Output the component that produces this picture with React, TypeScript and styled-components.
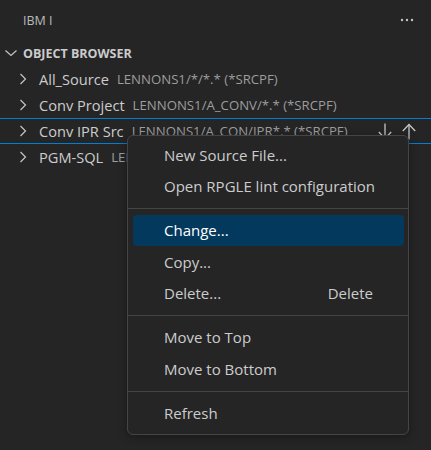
import React from "react";
import styled, { createGlobalStyle } from "styled-components";

type MenuEntry =
  | { kind: "item"; label: string; keys?: string; active?: boolean }
  | { kind: "sep" };

const rows = [
  { label: "All_Source", desc: "LENNONS1/*/*.* (*SRCPF)" },
  { label: "Conv Project", desc: "LENNONS1/A_CONV/*.* (*SRCPF)" },
  { label: "Conv IPR Src", desc: "LENNONS1/A_CON/IPR*.* (*SRCPF)", focused: true },
  { label: "PGM-SQL", desc: "LENNONS1/PGMSQL/*.* (*SRCPF)" },
];

const menu: MenuEntry[] = [
  { kind: "item", label: "New Source File..." },
  { kind: "item", label: "Open RPGLE lint configuration" },
  { kind: "sep" },
  { kind: "item", label: "Change...", active: true },
  { kind: "item", label: "Copy..." },
  { kind: "item", label: "Delete...", keys: "Delete" },
  { kind: "sep" },
  { kind: "item", label: "Move to Top" },
  { kind: "item", label: "Move to Bottom" },
  { kind: "sep" },
  { kind: "item", label: "Refresh" },
];

const Chevron: React.FC<{ down?: boolean }> = ({ down }) =>
  down ? (
    <svg width="18" height="18" viewBox="0 0 18 18">
      <polyline points="3.5,6.5 9,11.5 14.5,6.5" fill="none" stroke="#c5c5c5" strokeWidth="1.2" />
    </svg>
  ) : (
    <svg width="16" height="16" viewBox="0 0 16 16">
      <polyline points="5.5,3 10.5,8 5.5,13" fill="none" stroke="#c5c5c5" strokeWidth="1.2" />
    </svg>
  );

const Arrow: React.FC<{ up?: boolean }> = ({ up }) => (
  <svg width="16" height="17" viewBox="0 0 16 17" style={up ? undefined : { transform: "scaleY(-1)" }}>
    <polyline points="1.8,8 8,1.5 14.2,8" fill="none" stroke="#c5c5c5" strokeWidth="1.3" />
    <line x1="8" y1="1.5" x2="8" y2="16.5" stroke="#c5c5c5" strokeWidth="1.3" />
  </svg>
);

const App: React.FC = () => {
  return (
    <>
      <GlobalStyle />
      <Sidebar>
        <TitleBar>
          <span>IBM I</span>
          <Dots>
            <svg width="14" height="4" viewBox="0 0 14 4">
              <circle cx="2" cy="2" r="1.2" fill="#c5c5c5" />
              <circle cx="7" cy="2" r="1.2" fill="#c5c5c5" />
              <circle cx="12" cy="2" r="1.2" fill="#c5c5c5" />
            </svg>
          </Dots>
        </TitleBar>

        <SectionHeader>
          <Chevron down />
          <span>OBJECT BROWSER</span>
        </SectionHeader>

        <Tree>
          {rows.map((r) => (
            <Row key={r.label} $focused={r.focused}>
              <Twistie>
                <Chevron />
              </Twistie>
              <Label>{r.label}</Label>
              <Desc>{r.desc}</Desc>
              {r.focused && (
                <Actions>
                  <Arrow />
                  <Arrow up />
                </Actions>
              )}
            </Row>
          ))}
        </Tree>

        <Menu>
          {menu.map((m, i) =>
            m.kind === "sep" ? (
              <Separator key={i} />
            ) : (
              <MenuItem key={i} $active={m.active}>
                <span>{m.label}</span>
                {m.keys && <Keys>{m.keys}</Keys>}
              </MenuItem>
            )
          )}
        </Menu>
      </Sidebar>
    </>
  );
};

export default App;

/* ===================== styles ===================== */
const GlobalStyle = createGlobalStyle`
  html, body {
    margin: 0;
    padding: 0;
    background: #252526;
  }
  body {
    font-family: "Open Sans", "Noto Sans", sans-serif;
    -webkit-font-smoothing: antialiased;
  }
`;

const Sidebar = styled.div`
  position: relative;
  width: 431px;
  height: 450px;
  overflow: hidden;
  background: #252526;
  color: #cccccc;
`;

const TitleBar = styled.div`
  height: 40px;
  display: flex;
  align-items: center;
  justify-content: space-between;
  padding: 0 17px 0 23px;
  font-size: 12.5px;
  color: #bbbbbb;
`;

const Dots = styled.div`
  display: flex;
  align-items: center;
`;

const SectionHeader = styled.div`
  height: 26px;
  display: flex;
  align-items: center;
  gap: 3px;
  padding-left: 2px;
  font-size: 12.5px;
  font-weight: 700;
  color: #cccccc;

  svg {
    flex-shrink: 0;
  }
`;

const Tree = styled.div`
  display: flex;
  flex-direction: column;
`;

const Row = styled.div<{ $focused?: boolean }>`
  height: 26px;
  box-sizing: border-box;
  display: flex;
  align-items: center;
  padding-left: 15px;
  font-size: 14.6px;
  white-space: nowrap;
  border-top: 1px solid ${({ $focused }) => ($focused ? "#007fd4" : "transparent")};
  border-bottom: 1px solid ${({ $focused }) => ($focused ? "#007fd4" : "transparent")};
`;

const Twistie = styled.span`
  width: 16px;
  height: 16px;
  display: flex;
  margin-right: 8px;
`;

const Label = styled.span`
  color: #cccccc;
`;

const Desc = styled.span`
  margin-left: 8px;
  font-size: 13.2px;
  color: #9d9d9d;
`;

const Actions = styled.div`
  margin-left: auto;
  display: flex;
  align-items: center;
  gap: 7.5px;
  padding-right: 14.5px;
`;

const Menu = styled.div`
  position: absolute;
  left: 127px;
  top: 135px;
  width: 282px;
  box-sizing: border-box;
  padding: 3px 0 5px;
  background: #252526;
  border: 1px solid #454545;
  border-radius: 6px;
  box-shadow: 0 2px 8px rgba(0, 0, 0, 0.36);
  font-size: 15px;
`;

const MenuItem = styled.div<{ $active?: boolean }>`
  height: 31.5px;
  margin: 0 4px 0 5px;
  padding: 0 31px;
  display: flex;
  align-items: center;
  justify-content: space-between;
  white-space: nowrap;
  border-radius: 4px;
  color: ${({ $active }) => ($active ? "#ffffff" : "#cccccc")};
  background: ${({ $active }) => ($active ? "#04395e" : "transparent")};
`;

const Keys = styled.span`
  color: #cccccc;
`;

const Separator = styled.div`
  height: 1px;
  margin: 6px 0 5.5px;
  background: #454545;
`;
